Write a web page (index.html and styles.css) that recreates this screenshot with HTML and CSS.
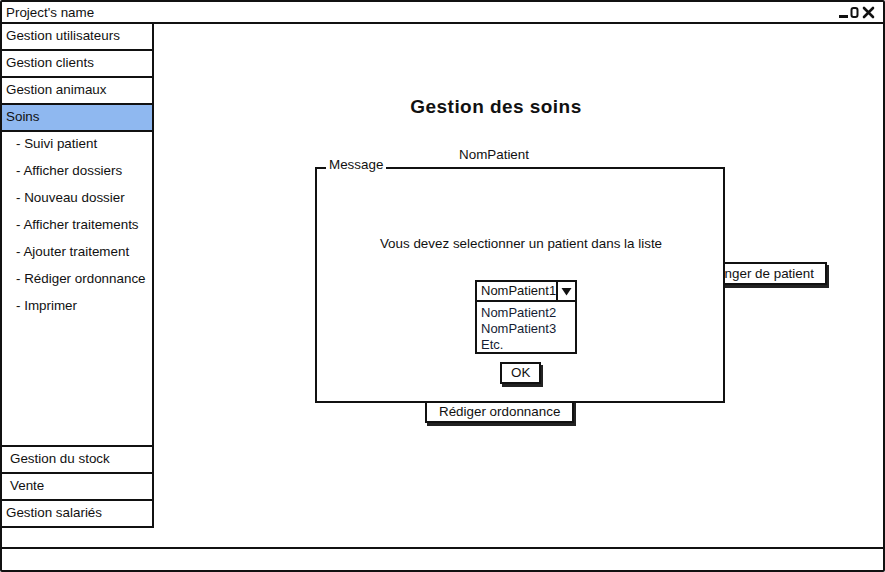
FILE: index.html
```html
<!DOCTYPE html>
<html lang="fr">
<head>
    <meta charset="UTF-8">
    <title>Gestion des soins</title>
    <link rel="stylesheet" href="styles.css">
</head>
<body>
<div class="window">
    <!--barre de titre-->
    <div class="title-bar">
        <span class="title-text">Project's name</span>
        <svg class="win-controls" width="40" height="14" viewBox="0 0 40 14">
            <rect x="0" y="9" width="9" height="3" fill="#111"></rect>
            <rect x="12.5" y="2" width="6" height="9" rx="2" fill="none" stroke="#111" stroke-width="2"></rect>
            <path d="M25 2 L34 11 M34 2 L25 11" stroke="#111" stroke-width="2.6" stroke-linecap="round"></path>
        </svg>
    </div>

    <div class="body">
        <!--menu de gauche-->
        <ul class="side-menu">
            <li class="menu-item">Gestion utilisateurs</li>
            <li class="menu-item">Gestion clients</li>
            <li class="menu-item">Gestion animaux</li>
            <li class="menu-item selected">Soins</li>
            <li class="sub-menu">
                <ul>
                    <li>- Suivi patient</li>
                    <li>- Afficher dossiers</li>
                    <li>- Nouveau dossier</li>
                    <li>- Afficher traitements</li>
                    <li>- Ajouter traitement</li>
                    <li>- Rédiger ordonnance</li>
                    <li>- Imprimer</li>
                </ul>
            </li>
            <li class="menu-item indent">Gestion du stock</li>
            <li class="menu-item indent">Vente</li>
            <li class="menu-item">Gestion salariés</li>
        </ul>

        <!--zone principale-->
        <div class="main">
            <h1 class="page-title">Gestion des soins</h1>
            <div class="patient-label">NomPatient</div>
            <span class="btn btn-change">Changer de patient</span>
            <span class="btn btn-prescribe">Rédiger ordonnance</span>

            <!--boite de dialogue-->
            <div class="dialog">
                <span class="dialog-legend">Message</span>
                <p class="dialog-text">Vous devez selectionner un patient dans la liste</p>
                <div class="combo">
                    <div class="combo-head">
                        <span class="combo-value">NomPatient1</span>
                        <span class="combo-arrow">
                            <svg width="11" height="9" viewBox="0 0 11 9"><path d="M0.5 1 L10.5 1 L5.5 8.5 Z" fill="#111"></path></svg>
                        </span>
                    </div>
                    <ul class="combo-list">
                        <li>NomPatient2</li>
                        <li>NomPatient3</li>
                        <li>Etc.</li>
                    </ul>
                </div>
                <span class="btn btn-ok">OK</span>
            </div>
        </div>
    </div>

    <div class="status-bar"></div>
</div>
</body>
</html>
```

FILE: styles.css
```css
* {
    box-sizing: border-box;
}

body {
    margin: 0;
    font-family: "Liberation Sans", Arial, sans-serif;
    font-size: 13.4px;
    color: #111;
    background-color: #fff;
}

ul {
    list-style: none;
    margin: 0;
    padding: 0;
}

.window {
    width: 885px;
    height: 572px;
    border: 2px solid #111;
    border-radius: 2px;
    display: flex;
    flex-direction: column;
}

.title-bar {
    height: 22px;
    border-bottom: 2px solid #111;
    display: flex;
    align-items: center;
    justify-content: space-between;
    padding: 1px 4px 0 4px;
}

.title-text {
    line-height: 20px;
}

.win-controls {
    margin-top: 1px;
}

.body {
    flex: 1;
    display: flex;
    align-items: flex-start;
}

.side-menu {
    width: 152px;
    border-right: 2px solid #111;
    flex-shrink: 0;
}

.menu-item {
    height: 27px;
    line-height: 24px;
    padding-left: 4px;
    border-bottom: 2px solid #111;
}

.menu-item.indent {
    padding-left: 8px;
}

.selected {
    background-color: #8fb8f0;
}

.sub-menu {
    height: 315px;
    border-bottom: 2px solid #111;
}

.sub-menu li {
    height: 27px;
    line-height: 24px;
    padding-left: 14px;
}

.main {
    flex: 1;
    align-self: stretch;
    position: relative;
    padding-top: 71px;
}

.page-title {
    margin: 0 0 0 52px;
    width: 580px;
    text-align: center;
    font-size: 19px;
    letter-spacing: 0.45px;
    line-height: 24px;
}

.patient-label {
    margin: 28px 0 0 50px;
    width: 580px;
    text-align: center;
    line-height: 16px;
}

.btn {
    display: block;
    width: fit-content;
    border: 2px solid #111;
    background-color: #fff;
    box-shadow: 2px 3px 0 #222;
    line-height: 19px;
    padding: 0 11px;
}

.btn-change {
    margin: 99px 0 0 533px;
}

.btn-prescribe {
    margin: 115px 0 0 271px;
    padding: 0 12px;
}

.dialog {
    position: absolute;
    left: 161px;
    top: 143px;
    width: 410px;
    height: 236px;
    border: 2px solid #111;
    background-color: #fff;
    padding-top: 67px;
}

.dialog-legend {
    position: absolute;
    top: -12px;
    left: 9px;
    padding: 0 3px;
    background-color: #fff;
    line-height: 16px;
}

.dialog-text {
    margin: 0;
    text-align: center;
    line-height: 16px;
    padding-left: 2px;
}

.combo {
    width: 102px;
    margin: 28px 0 0 158px;
    font-size: 13px;
}

.combo-head {
    height: 22px;
    border: 2px solid #111;
    display: flex;
}

.combo-value {
    flex: 1;
    padding-left: 4px;
    line-height: 18px;
    white-space: nowrap;
}

.combo-arrow {
    width: 19px;
    border-left: 2px solid #111;
    display: flex;
    align-items: center;
    justify-content: center;
}

.combo-list {
    height: 52px;
    border: 2px solid #111;
    border-top: none;
    padding: 3px 0 0 4px;
    color: #141c33;
}

.combo-list li {
    line-height: 16px;
}

.btn-ok {
    margin: 8px 0 0 183px;
    padding: 0 9px;
    line-height: 18px;
}

.status-bar {
    height: 23px;
    border-top: 2px solid #111;
}
```
